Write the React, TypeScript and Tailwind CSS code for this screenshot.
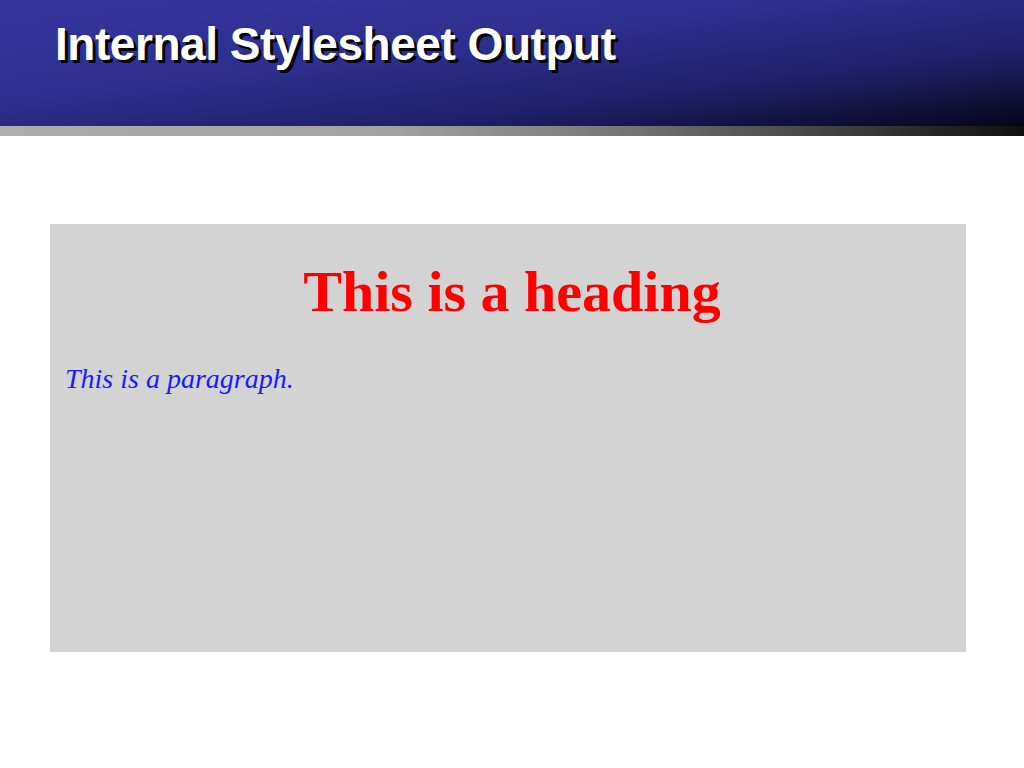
export default function App() {
  return (
    <div className="min-h-[768px] w-[1024px] bg-white">
      <header className="h-[126px] bg-[linear-gradient(to_bottom_right,#36369e_0%,#2e2e8e_40%,#20206a_70%,#06061a_100%)] pl-[55px] pt-[21px]">
        <h1
          className="text-[46px] leading-[46px] font-bold text-white tracking-[-0.01em] [text-shadow:3px_3px_0_#000]"
          style={{ fontFamily: '"Liberation Sans", Arial, sans-serif' }}
        >
          Internal Stylesheet Output
        </h1>
      </header>
      <div className="h-[10px] bg-[linear-gradient(to_right,#adadad_0%,#a2a2a2_38%,#7c7c7c_58%,#4a4a4a_78%,#101010_100%)]" />
      <main className="pt-[88px] pl-[50px]">
        <div className="h-[428px] w-[916px] bg-[#d3d3d3] pt-[39px]">
          <h2
            className="pl-[8px] text-center text-[58px] leading-[58px] font-bold text-[#ff0000]"
            style={{ fontFamily: '"Liberation Serif", "Times New Roman", serif' }}
          >
            This is a heading
          </h2>
          <p
            className="mt-[44px] pl-[15px] text-[28px] leading-[28px] italic text-[#1a1aff]"
            style={{ fontFamily: '"Liberation Serif", "Times New Roman", serif' }}
          >
            This is a paragraph.
          </p>
        </div>
      </main>
    </div>
  );
}
